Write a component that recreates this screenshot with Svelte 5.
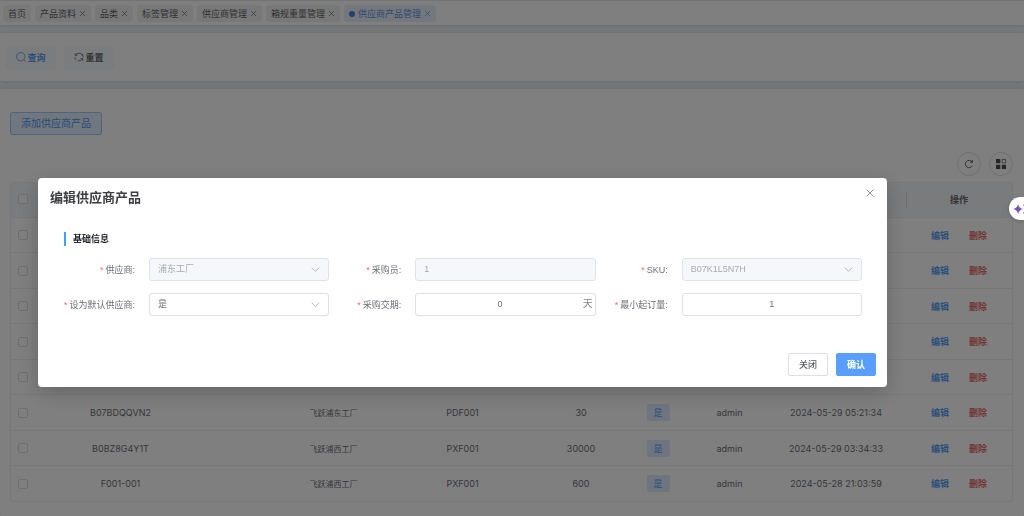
<script>
  const tabs = [
    { name: '首页', fixed: true },
    { name: '产品资料' },
    { name: '品类' },
    { name: '标签管理' },
    { name: '供应商管理' },
    { name: '箱规重量管理' },
    { name: '供应商产品管理', active: true }
  ];

  const columnWidths = [24, 171, 75, 105, 153, 84, 70, 73, 140, 106];

  const blank = { sku: '', factory: '', code: '', qty: '', isDefault: '', user: '', time: '' };
  const rows = [
    blank,
    blank,
    blank,
    blank,
    blank,
    { sku: 'B07BDQQVN2', factory: '飞跃浦东工厂', code: 'PDF001', qty: '30', isDefault: '是', user: 'admin', time: '2024-05-29 05:21:34' },
    { sku: 'B0BZ8G4Y1T', factory: '飞跃浦西工厂', code: 'PXF001', qty: '30000', isDefault: '是', user: 'admin', time: '2024-05-29 03:34:33' },
    { sku: 'F001-001', factory: '飞跃浦西工厂', code: 'PXF001', qty: '600', isDefault: '是', user: 'admin', time: '2024-05-28 21:03:59' }
  ];

  let isDefault = $state('是');
  let leadTime = $state('0');
  let minOrder = $state('1');
</script>

{#snippet cross()}
  <svg class="cross" viewBox="0 0 10 10" aria-hidden="true"><path d="M1.5 1.5 8.5 8.5M8.5 1.5 1.5 8.5" /></svg>
{/snippet}

{#snippet chevron()}
  <svg class="chevron" viewBox="0 0 10 10" aria-hidden="true"><path d="M1 3 5 7 9 3" /></svg>
{/snippet}

<div class="page">
  <nav class="tabs">
    {#each tabs as tab}
      <a class="tab" class:active={tab.active} href="#{tab.name}">
        {#if tab.active}<span class="dot"></span>{/if}
        <span>{tab.name}</span>
        {#if !tab.fixed}{@render cross()}{/if}
      </a>
    {/each}
  </nav>

  <section class="card search">
    <button class="tool primary">
      <svg viewBox="0 0 12 12" aria-hidden="true"><circle cx="5.7" cy="5.7" r="4.9" /><path d="M9.2 9.2 11.4 11.4" /></svg>
      <span>查询</span>
    </button>
    <button class="tool">
      <svg viewBox="0 0 12 12" aria-hidden="true">
        <path d="M1.6 1.4V4H4.2M1.8 4A4.7 4.7 0 0 1 10.6 5M1.1 6.3A4.9 4.9 0 0 0 2.6 9.4M10.4 10.6V8H7.8M10.2 8A4.7 4.7 0 0 1 4.6 10.5M10.9 6.4A4.9 4.9 0 0 0 9.6 2.7" />
      </svg>
      <span>重置</span>
    </button>
  </section>

  <section class="card main">
    <button class="add">添加供应商产品</button>

    <div class="table-tools">
      <button class="round" aria-label="刷新">
        <svg viewBox="0 0 12 12" aria-hidden="true"><path d="M10 8A4.4 4.4 0 1 1 9.6 3.4M10.1 1.2V4H7.4" /></svg>
      </button>
      <button class="round" aria-label="列设置">
        <svg class="grid-icon" viewBox="0 0 12 12" aria-hidden="true">
          <path class="solid" d="M1 1H5.3V5.3H1ZM1 6.8H5.3V11H1ZM6.8 6.8H11V11H6.8Z" />
          <path class="outline" d="M7.2 1.4H10.6V4.9H7.2Z" />
        </svg>
      </button>
    </div>

    <div class="table-wrap">
      <table>
        <colgroup>
          {#each columnWidths as w}<col style="width: {w}px" />{/each}
        </colgroup>
        <thead>
          <tr>
            <th><input type="checkbox" aria-label="全选" /></th>
            <th colspan="8"></th>
            <th class="ops-head">操作</th>
          </tr>
        </thead>
        <tbody>
          {#each rows as row}
            <tr>
              <td><input type="checkbox" aria-label="选择" /></td>
              <td>{row.sku}</td>
              <td></td>
              <td class="zh">{row.factory}</td>
              <td>{row.code}</td>
              <td>{row.qty}</td>
              <td>{#if row.isDefault}<span class="tag">{row.isDefault}</span>{/if}</td>
              <td>{row.user}</td>
              <td>{row.time}</td>
              <td>
                <div class="ops">
                  <button class="link edit">编辑</button>
                  <button class="link delete">删除</button>
                </div>
              </td>
            </tr>
          {/each}
        </tbody>
      </table>
    </div>
  </section>
</div>

<div class="overlay">
  <div class="dialog" role="dialog" aria-modal="true" aria-labelledby="dialog-title">
    <header>
      <h2 id="dialog-title">编辑供应商产品</h2>
      <button class="close" aria-label="关闭窗口">{@render cross()}</button>
    </header>

    <h3>基础信息</h3>

    <form>
      <div class="field">
        <label for="supplier"><i>*</i>供应商:</label>
        <div class="control">
          <select id="supplier" disabled><option>浦东工厂</option></select>
          {@render chevron()}
        </div>
      </div>
      <div class="field">
        <label for="buyer"><i>*</i>采购员:</label>
        <div class="control"><input id="buyer" value="1" disabled /></div>
      </div>
      <div class="field">
        <label for="sku"><i>*</i>SKU:</label>
        <div class="control">
          <select id="sku" disabled><option>B07K1L5N7H</option></select>
          {@render chevron()}
        </div>
      </div>
      <div class="field">
        <label for="default"><i>*</i>设为默认供应商:</label>
        <div class="control">
          <select id="default" bind:value={isDefault}><option>是</option><option>否</option></select>
          {@render chevron()}
        </div>
      </div>
      <div class="field">
        <label for="lead"><i>*</i>采购交期:</label>
        <div class="control">
          <input id="lead" class="number with-unit" bind:value={leadTime} />
          <span class="unit">天</span>
        </div>
      </div>
      <div class="field">
        <label for="min"><i>*</i>最小起订量:</label>
        <div class="control"><input id="min" class="number" bind:value={minOrder} /></div>
      </div>
    </form>

    <footer>
      <button class="action">关闭</button>
      <button class="action confirm">确认</button>
    </footer>
  </div>
</div>

<button class="assistant" aria-label="助手">
  <svg viewBox="0 0 20 14" aria-hidden="true">
    <path d="M6 1Q6.9 6.1 12 7 6.9 7.9 6 13 5.1 7.9 0 7 5.1 6.1 6 1Z" />
    <path d="M13.4 0.2Q13.8 2 15.6 2.4 13.8 2.8 13.4 4.6 13 2.8 11.2 2.4 13 2 13.4 0.2ZM13.4 9.4Q13.8 11.2 15.6 11.6 13.8 12 13.4 13.8 13 12 11.2 11.6 13 11.2 13.4 9.4Z" />
  </svg>
</button>

<style>
  :global(body) {
    margin: 0;
    overflow: hidden;
    background: #f0f2f5;
    font-family: Inter, 'Noto Sans CJK SC', sans-serif;
    font-size: 9px;
    color: #6c6e73;
  }

  * {
    box-sizing: border-box;
  }

  button,
  input,
  select {
    font: inherit;
    color: inherit;
    margin: 0;
    padding: 0;
  }

  button {
    border: 0;
    background: none;
    white-space: nowrap;
  }

  svg {
    display: block;
    flex: none;
    fill: none;
    stroke: currentColor;
  }

  .page {
    display: flex;
    flex-direction: column;
    gap: 8px;
    height: 100vh;
    overflow: hidden;
  }

  .tabs {
    display: flex;
    flex: none;
    align-items: center;
    gap: 4px;
    height: 25px;
    padding: 1px 3px 0;
    background: #fff;
    border-top: 1px solid #e4e6ea;
    box-shadow: 0 1px 3px rgba(0, 21, 41, 0.12);
  }

  .tab {
    display: flex;
    align-items: center;
    gap: 3px;
    height: 17px;
    padding: 0 5px;
    border-radius: 3px;
    background: #f1f1f2;
    color: #606167;
    text-decoration: none;
    white-space: nowrap;
  }

  .tab.active {
    background: #e9f0fb;
    color: #5f8fdc;
  }

  .tab .cross {
    width: 7px;
    height: 7px;
  }

  .dot {
    width: 6px;
    height: 6px;
    border-radius: 50%;
    background: #4a7fd8;
  }

  .card {
    background: #fff;
    border-radius: 2px;
    box-shadow: 0 1px 6px rgba(0, 21, 41, 0.14);
  }

  .search {
    display: flex;
    flex: none;
    align-items: center;
    gap: 8px;
    height: 48px;
    padding: 0 6px;
  }

  .tool {
    display: flex;
    align-items: center;
    justify-content: center;
    gap: 1px;
    width: 50px;
    height: 23px;
    border-radius: 2px;
    background: #f7f8fc;
    font-weight: 600;
    color: #66676b;
  }

  .tool svg {
    width: 10px;
    height: 10px;
  }

  .tool.primary {
    color: #559ff5;
  }

  .main {
    flex: 1;
    padding: 23px 11px 0 10px;
  }

  .add {
    width: 92px;
    height: 23px;
    padding-bottom: 2px;
    border: 1px solid #a0cbfa;
    border-radius: 2px;
    background: #e2eefc;
    color: #4c98ef;
    font-size: 10px;
  }

  .table-tools {
    display: flex;
    justify-content: flex-end;
    gap: 8px;
    padding: 17px 0 6px;
  }

  .round {
    display: grid;
    place-items: center;
    width: 24px;
    height: 24px;
    border: 1px solid #dcdfe6;
    border-radius: 50%;
    color: #4b4c50;
  }

  .round svg {
    width: 10px;
    height: 10px;
  }

  .round .grid-icon {
    width: 12px;
    height: 12px;
  }

  .solid {
    fill: currentColor;
    stroke: none;
  }

  .outline {
    stroke-width: 0.7;
  }

  .table-wrap {
    border: 1px solid #ebeef5;
    border-radius: 3px;
    overflow: hidden;
  }

  table {
    width: 100%;
    table-layout: fixed;
    border-collapse: separate;
    border-spacing: 0;
  }

  th,
  td {
    height: 35px;
    padding: 0;
    border-bottom: 1px solid #ebeef5;
    text-align: center;
    vertical-align: middle;
    white-space: nowrap;
  }

  tbody tr:nth-child(even) td {
    height: 36px;
  }

  tbody tr:last-child td {
    height: 35px;
    border-bottom: 0;
  }

  th {
    padding-bottom: 2px;
    background: #f5f6f8;
    font-weight: 600;
    color: #66676b;
  }

  .ops-head {
    background: linear-gradient(#dcdfe6, #dcdfe6) left center / 1px 18px no-repeat #f5f6f8;
  }

  .zh {
    font-size: 8px;
  }

  td input,
  th input {
    display: block;
    appearance: none;
    width: 10px;
    height: 10px;
    margin: 0 auto;
    border: 1px solid #d9dce3;
    border-radius: 2px;
    background: #fff;
  }

  .tag {
    display: block;
    width: 23px;
    height: 17px;
    margin: 0 auto;
    border-radius: 2px;
    background: #dcebfc;
    color: #559ff5;
    line-height: 17px;
  }

  .ops {
    display: flex;
    justify-content: center;
    gap: 20px;
  }

  .link {
    font-weight: 600;
  }

  .edit {
    color: #559ff5;
  }

  .delete {
    color: #e46c6c;
  }

  .overlay {
    position: fixed;
    inset: 0;
    display: flex;
    align-items: flex-start;
    padding: 178px 137px 0 38px;
    background: rgba(0, 0, 0, 0.5);
    font-family: 'Liberation Sans', 'Noto Sans CJK SC', sans-serif;
  }

  .dialog {
    flex: 1;
    border-radius: 4px;
    background: #fff;
    box-shadow: 0 6px 20px rgba(0, 0, 0, 0.2);
  }

  header {
    display: flex;
    align-items: flex-start;
    justify-content: space-between;
    padding: 10px 12px 0;
  }

  h2 {
    margin: 0;
    font-size: 13px;
    font-weight: 600;
    line-height: 20px;
    color: #3c3d40;
  }

  .close {
    display: grid;
    place-items: center;
    width: 10px;
    height: 10px;
    color: #909399;
  }

  .close .cross {
    width: 10px;
    height: 10px;
  }

  h3 {
    margin: 24px 0 12px 26px;
    padding-left: 7px;
    border-left: 2px solid #409eff;
    font-size: 9px;
    font-weight: 700;
    line-height: 14px;
    color: #24262b;
  }

  form {
    display: grid;
    grid-template-columns: repeat(3, 1fr);
    row-gap: 12px;
    padding: 0 25px;
  }

  .field {
    display: flex;
    align-items: center;
    height: 23px;
  }

  label {
    flex: none;
    width: 86px;
    padding-right: 14px;
    text-align: right;
    white-space: nowrap;
  }

  label i {
    margin-right: 2px;
    color: #f56c6c;
    font-style: normal;
  }

  .control {
    position: relative;
    flex: 1;
    height: 23px;
  }

  .control input,
  .control select {
    display: block;
    appearance: none;
    width: 100%;
    height: 23px;
    padding: 0 8px 1px;
    border: 1px solid #dcdfe6;
    border-radius: 3px;
    background: #fff;
    opacity: 1;
  }

  .control input:disabled,
  .control select:disabled {
    border-color: #e0e3ea;
    background: #f5f7fa;
    color: #a8abb2;
  }

  .control .number {
    text-align: center;
  }

  .control .with-unit {
    padding: 0 14px 1px 3px;
  }

  .control .chevron {
    position: absolute;
    top: 7px;
    right: 9px;
    width: 9px;
    height: 9px;
    color: #a8abb2;
    pointer-events: none;
  }

  .unit {
    position: absolute;
    right: 3px;
    top: 0;
    font-size: 10px;
    line-height: 22px;
    color: #808287;
  }

  footer {
    display: flex;
    justify-content: flex-end;
    gap: 8px;
    padding: 37px 11px 11px;
  }

  .action {
    width: 40px;
    height: 23px;
    border: 1px solid #dcdfe6;
    border-radius: 2px;
    background: #fff;
    color: #55575b;
    font-weight: 500;
  }

  .confirm {
    border-color: #579ffb;
    background: #579ffb;
    color: #fff;
    font-weight: 600;
  }

  .assistant {
    position: fixed;
    top: 197px;
    right: 0;
    width: 15px;
    height: 23px;
    padding-left: 4px;
    border-radius: 12px 0 0 12px;
    background: #fff;
    box-shadow: 0 1px 4px rgba(0, 0, 0, 0.2);
    color: #7c52b0;
    overflow: hidden;
  }

  .assistant svg {
    width: 17px;
    height: 12px;
    fill: currentColor;
    stroke: none;
  }
</style>
